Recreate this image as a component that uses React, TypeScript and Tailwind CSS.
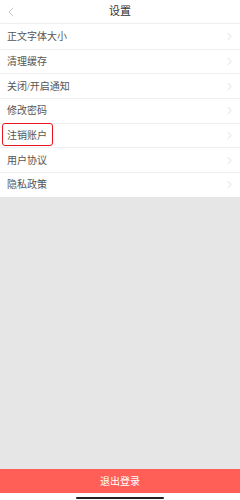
import { ChevronLeft, ChevronRight } from 'lucide-react';

const items = ['正文字体大小', '清理缓存', '关闭/开启通知', '修改密码', '注销账户', '用户协议', '隐私政策'];

export default function App() {
  return (
    <div
      className="w-[240px] h-[500px] flex flex-col bg-[#e6e6e6] overflow-hidden"
      style={{ fontFamily: '"Liberation Serif", "Noto Sans CJK SC", serif' }}
    >
      {/* header */}
      <div className="h-[24px] bg-white flex items-center relative border-b border-[#eeeeee]">
        <ChevronLeft className="absolute left-[3px] w-[16px] h-[16px] text-[#aaaaaa]" strokeWidth={1} />
        <div className="flex-1 text-center text-[11px] text-[#333333]">设置</div>
      </div>

      {/* list */}
      <div className="bg-white">
        {items.map((name, i) => (
          <div
            key={name}
            className={`h-[24.7px] flex items-center justify-between pl-[7px] pr-[4px] ${i > 0 ? 'border-t border-[#eeeeee]' : ''}`}
          >
            {name === '注销账户' ? (
              <span className="relative text-[10px] text-[#555555]">
                {name}
                <span className="absolute -left-[5px] -top-[5px] w-[51px] h-[23px] border-[1.5px] border-[#e8141e] rounded-[3px]" />
              </span>
            ) : (
              <span className="text-[10px] text-[#555555]">{name}</span>
            )}
            <ChevronRight className="w-[13px] h-[13px] text-[#c4c4c4]" strokeWidth={1} />
          </div>
        ))}
      </div>

      <div className="flex-1" />

      {/* logout */}
      <div className="h-[24px] bg-[#ff5f57] flex items-center justify-center text-[10px] text-white">
        退出登录
      </div>
      <div className="h-[7px] bg-white flex items-end justify-center pb-[1px]">
        <div className="w-[88px] h-[2px] rounded-full bg-[#222222]" />
      </div>
    </div>
  );
}
